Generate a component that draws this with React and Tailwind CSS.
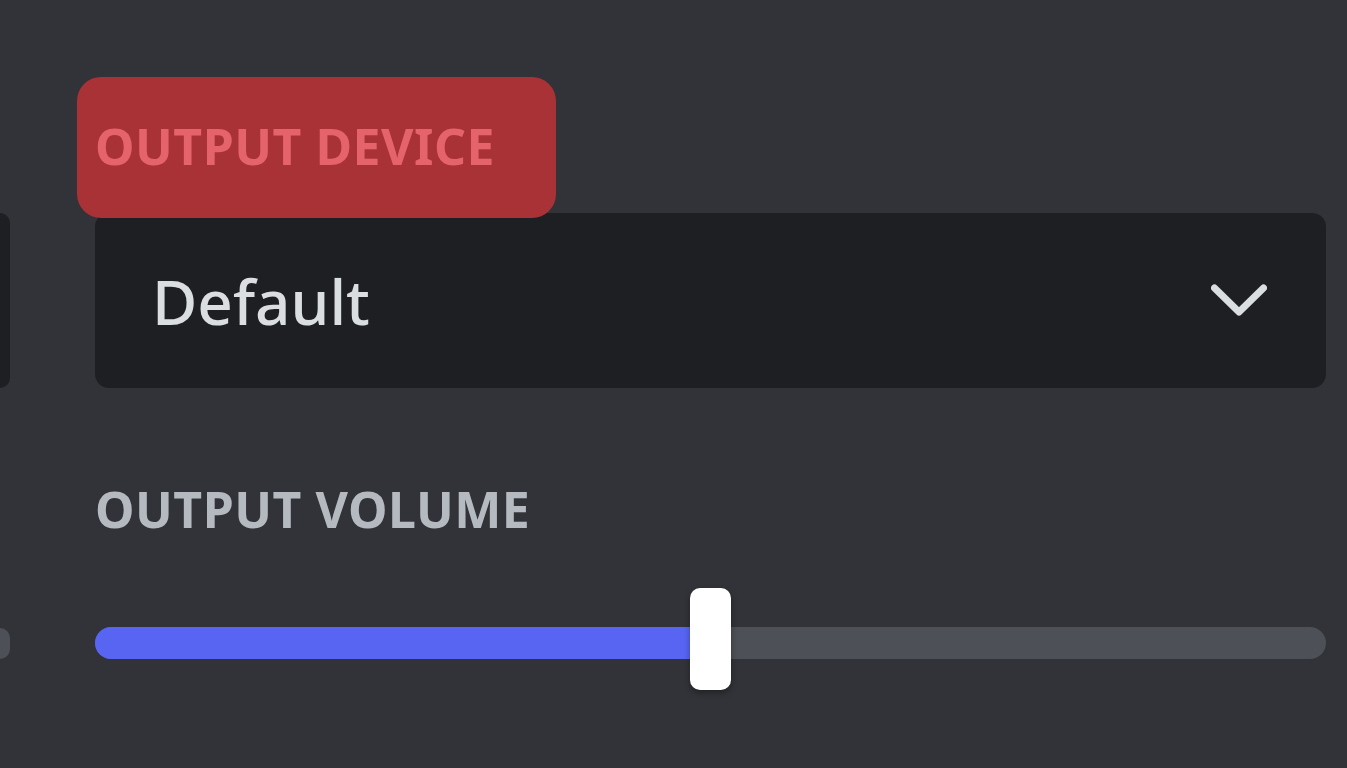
import React from "react";

const Chevron = () => (
    <svg width="56" height="38" viewBox="0 0 56 38" fill="none">
        <polyline points="3.5,6 28,30 52.5,6" stroke="#dbdee1" strokeWidth="7" strokeLinecap="round" strokeLinejoin="round" />
    </svg>
);

const App = () => {
    const volume = 49; // percent

    return (
        <div className="w-[1347px] h-[768px] bg-[#313338] overflow-hidden flex" style={{ fontFamily: '"Noto Sans", "Open Sans", sans-serif' }}>
            {/* Left column, cut off by the frame */}
            <div className="w-[10px] shrink-0 flex flex-col">
                <div className="mt-[213px] h-[175px] bg-[#1e1f22] rounded-r-[10px]" />
                <div className="mt-[240px] h-[31px] bg-[#4e5058] rounded-r-full" />
            </div>

            {/* Right column */}
            <div className="ml-[85px] w-[1231px] flex flex-col">
                {/* Output device label with highlight */}
                <div className="relative mt-[114px] h-[64px] flex items-center">
                    <div className="absolute left-[-18px] top-[-37px] w-[479px] h-[141px] bg-[#a83236] rounded-[24px]" />
                    <span className="relative text-[50px] font-bold text-[#e5636b] tracking-[0.01em] uppercase leading-none">
                        Output Device
                    </span>
                </div>

                {/* Select */}
                <div className="mt-[35px] h-[175px] bg-[#1e1f22] rounded-[14px] flex items-center justify-between pl-[57px] pr-[59px]">
                    <span className="text-[62px] font-medium text-[#dbdee1] leading-none">Default</span>
                    <Chevron />
                </div>

                {/* Output volume */}
                <div className="mt-[96px] text-[50px] font-bold text-[#b5bac1] tracking-[0.01em] uppercase leading-none">
                    Output Volume
                </div>

                {/* Slider */}
                <div className="relative mt-[93px] h-[32px] rounded-full bg-[#4e5058]">
                    <div className="h-full rounded-l-full bg-[#5865f2]" style={{ width: `${volume}%` }} />
                    <div
                        className="absolute top-[-39px] w-[41px] h-[102px] bg-white rounded-[10px] shadow-[0_3px_6px_rgba(0,0,0,0.35)]"
                        style={{ left: `calc(${volume}% - 8px)` }}
                    />
                </div>
            </div>
        </div>
    );
};

export default App;
